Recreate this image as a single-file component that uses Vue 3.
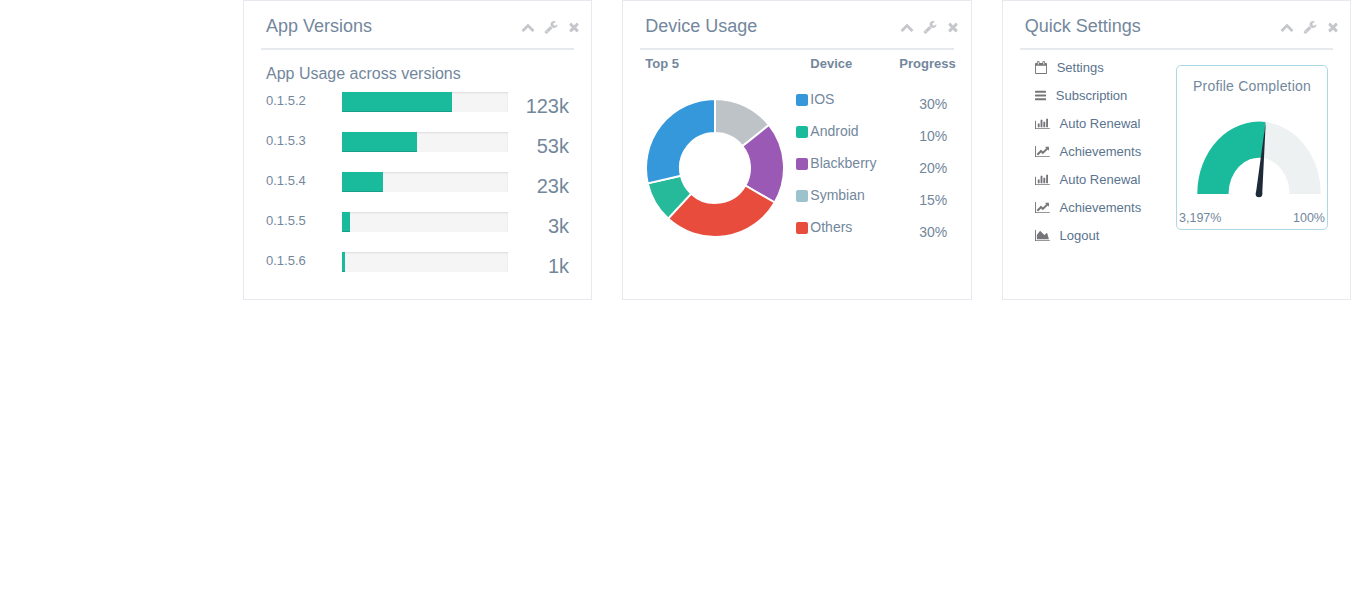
<script setup>
const icons = {
  up: 'M1683 1331l-166 165q-19 19-45 19t-45-19l-531-531-531 531q-19 19-45 19t-45-19l-166-165q-19-19-19-45.5t19-45.5l742-741q19-19 45-19t45 19l742 741q19 19 19 45.5t-19 45.5z',
  wrench: 'M448 1472q0-26-19-45t-45-19-45 19-19 45 19 45 45 19 45-19 19-45zm644-420l-682 682q-37 37-90 37-52 0-91-37l-106-108q-38-36-38-90 0-53 38-91l681-681q39 98 114.5 173.5t173.5 114.5zm634-435q0 39-23 106-47 134-164.5 217.5t-258.5 83.5q-185 0-316.5-131.5t-131.5-316.5 131.5-316.5 316.5-131.5q58 0 121.5 16.5t107.5 46.5q16 11 16 28t-16 28l-293 169v224l193 107q5-3 79-48.5t135.5-81 70.5-35.5q15 0 23.5 10t8.5 25z',
  close: 'M1490 1322q0 40-28 68l-136 136q-28 28-68 28t-68-28l-294-294-294 294q-28 28-68 28t-68-28l-136-136q-28-28-28-68t28-68l294-294-294-294q-28-28-28-68t28-68l136-136q28-28 68-28t68 28l294 294 294-294q28-28 68-28t68 28l136 136q28 28 28 68t-28 68l-294 294 294 294q28 28 28 68z'
}
const glyphs = {
  calendar: { vb: '64 0 1664 1792', w: 12, d: 'M192 1664h1408v-1024h-1408v1024zm384-1216v-288q0-14-9-23t-23-9h-64q-14 0-23 9t-9 23v288q0 14 9 23t23 9h64q14 0 23-9t9-23zm768 0v-288q0-14-9-23t-23-9h-64q-14 0-23 9t-9 23v288q0 14 9 23t23 9h64q14 0 23-9t9-23zm384-64v1280q0 52-38 90t-90 38h-1408q-52 0-90-38t-38-90v-1280q0-52 38-90t90-38h128v-96q0-66 47-113t113-47h64q66 0 113 47t47 113v96h384v-96q0-66 47-113t113-47h64q66 0 113 47t47 113v96h128q52 0 90 38t38 90z' },
  bars: { vb: '128 0 1536 1792', w: 11.14, d: 'M1664 1344v128q0 26-19 45t-45 19h-1408q-26 0-45-19t-19-45v-128q0-26 19-45t45-19h1408q26 0 45 19t19 45zm0-512v128q0 26-19 45t-45 19h-1408q-26 0-45-19t-19-45v-128q0-26 19-45t45-19h1408q26 0 45 19t19 45zm0-512v128q0 26-19 45t-45 19h-1408q-26 0-45-19t-19-45v-128q0-26 19-45t45-19h1408q26 0 45 19t19 45z' },
  bar: { vb: '0 0 2048 1792', w: 14.86, d: 'M640 896v512h-256v-512h256zm384-512v1024h-256v-1024h256zm1024 1152v128h-2048v-1152h128v1024h1920zm-640-896v768h-256v-768h256zm384-384v1152h-256v-1152h256z' },
  line: { vb: '0 0 2048 1792', w: 14.86, d: 'M2048 1536v128h-2048v-1536h128v1408h1920zm-128-1248v435q0 21-19.5 29.5t-35.5-7.5l-121-121-633 633q-10 10-23 10t-23-10l-233-233-416 416-192-192 585-585q10-10 23-10t23 10l233 233 464-464-121-121q-16-16-7.5-35.5t29.5-19.5h435q14 0 23 9t9 23z' },
  area: { vb: '0 0 2048 1792', w: 14.86, d: 'M2048 1536v128h-2048v-1536h128v1408h1920zm-384-1024l256 896h-1664v-576l448-576 576 576z' }
}
const versions = [
  { name: '0.1.5.2', pct: 66.3, val: '123k' },
  { name: '0.1.5.3', pct: 45, val: '53k' },
  { name: '0.1.5.4', pct: 24.7, val: '23k' },
  { name: '0.1.5.5', pct: 5, val: '3k' },
  { name: '0.1.5.6', pct: 2, val: '1k' }
]
const devices = [
  { name: 'IOS', color: '#3498DB', pct: '30%' },
  { name: 'Android', color: '#1ABB9C', pct: '10%' },
  { name: 'Blackberry', color: '#9B59B6', pct: '20%' },
  { name: 'Symbian', color: '#9CC2CB', pct: '15%' },
  { name: 'Others', color: '#E74C3C', pct: '30%' }
]
const cx = 70, cy = 70, R = 69, r = 35
const slices = [
  { v: 15, c: '#BDC3C7' },
  { v: 20, c: '#9B59B6' },
  { v: 30, c: '#E74C3C' },
  { v: 10, c: '#26B99A' },
  { v: 30, c: '#3498DB' }
]
const total = slices.reduce((s, x) => s + x.v, 0)
let acc = 0
const pt = (rad, a) => `${(cx + rad * Math.sin(a)).toFixed(2)} ${(cy - rad * Math.cos(a)).toFixed(2)}`
const donut = slices.map((s) => {
  const a0 = (acc / total) * Math.PI * 2
  acc += s.v
  const a1 = (acc / total) * Math.PI * 2
  const large = a1 - a0 > Math.PI ? 1 : 0
  return {
    c: s.c,
    d: `M${pt(R, a0)}A${R} ${R} 0 ${large} 1 ${pt(R, a1)}L${pt(r, a1)}A${r} ${r} 0 ${large} 0 ${pt(r, a0)}Z`
  }
})
const quick = [
  { icon: 'calendar', label: 'Settings' },
  { icon: 'bars', label: 'Subscription' },
  { icon: 'bar', label: 'Auto Renewal' },
  { icon: 'line', label: 'Achievements' },
  { icon: 'bar', label: 'Auto Renewal' },
  { icon: 'line', label: 'Achievements' },
  { icon: 'area', label: 'Logout' }
]
const titles = ['up', 'wrench', 'close']
</script>

<template>
  <div class="page">
    <section class="panel">
      <header class="title">
        <h2>App Versions</h2>
        <div class="toolbox">
          <svg v-for="t in titles" :key="t" class="tool" viewBox="0 0 1792 1792"><path :d="icons[t]" /></svg>
        </div>
      </header>
      <h4 class="sub">App Usage across versions</h4>
      <div class="versions">
        <div v-for="v in versions" :key="v.name" class="vrow">
          <span class="vname">{{ v.name }}</span>
          <div class="track"><div class="fill" :style="{ width: v.pct + '%' }"></div></div>
          <span class="vval">{{ v.val }}</span>
        </div>
      </div>
    </section>

    <section class="panel">
      <header class="title">
        <h2>Device Usage</h2>
        <div class="toolbox">
          <svg v-for="t in titles" :key="t" class="tool" viewBox="0 0 1792 1792"><path :d="icons[t]" /></svg>
        </div>
      </header>
      <div class="thead">
        <span>Top 5</span>
        <span>Device</span>
        <span>Progress</span>
      </div>
      <div class="dbody">
        <svg class="donut" width="140" height="140" viewBox="0 0 140 140">
          <path v-for="s in donut" :key="s.c" :d="s.d" :fill="s.c" stroke="#fff" stroke-width="2" />
        </svg>
        <ul class="legend">
          <li v-for="d in devices" :key="d.name">
            <i class="sq" :style="{ background: d.color }"></i>
            <span class="dname">{{ d.name }}</span>
            <span class="dpct">{{ d.pct }}</span>
          </li>
        </ul>
      </div>
    </section>

    <section class="panel">
      <header class="title">
        <h2>Quick Settings</h2>
        <div class="toolbox">
          <svg v-for="t in titles" :key="t" class="tool" viewBox="0 0 1792 1792"><path :d="icons[t]" /></svg>
        </div>
      </header>
      <div class="qbody">
        <ul class="quick">
          <li v-for="(q, i) in quick" :key="i">
            <svg class="qicon" :viewBox="glyphs[q.icon].vb" :width="glyphs[q.icon].w" height="13"><path :d="glyphs[q.icon].d" /></svg>
            <span>{{ q.label }}</span>
          </li>
        </ul>
        <div class="card">
          <h4>Profile Completion</h4>
          <svg class="gauge" width="150" height="82" viewBox="0 0 150 82">
            <path d="M20.3 76A61.7 72 0 0 1 88.5 4L85.7 39.9A30.5 36.3 0 0 0 51.5 76Z" fill="#1ABB9C" />
            <path d="M88.5 4A61.7 72 0 0 1 143.7 76H112.5A30.5 36.3 0 0 0 85.7 39.9Z" fill="#EEF1F2" />
            <path d="M88.8 3L85.2 76.3A3.3 3.3 0 0 1 78.8 76Z" fill="#1F2A38" />
            <circle cx="82" cy="76" r="3.3" fill="#1F2A38" />
          </svg>
          <div class="gl"><span>3,197%</span><span>100%</span></div>
        </div>
      </div>
    </section>
  </div>
</template>

<style>
html, body { margin: 0; background: #fff; }
</style>

<style scoped>
.page {
  display: grid;
  grid-template-columns: repeat(3, 1fr);
  gap: 30px;
  padding: 0 15px 0 243px;
  min-height: 613px;
  align-content: start;
  box-sizing: border-box;
  font-family: "Liberation Sans", Arial, sans-serif;
  color: #73879C;
}
.panel {
  box-sizing: border-box;
  height: 300px;
  border: 1px solid #E6E9ED;
  padding: 10px 17px;
  background: #fff;
  min-width: 0;
}
.title {
  box-sizing: border-box;
  height: 39px;
  border-bottom: 2px solid #E6E9ED;
  padding: 0 0 7px 5px;
  display: flex;
  align-items: center;
}
.title h2 {
  margin: 0;
  font-size: 18px;
  font-weight: 400;
  line-height: 20px;
}
.toolbox {
  margin-left: auto;
  margin-right: -6.5px;
  margin-top: 2px;
  display: flex;
  gap: 9px;
}
.tool {
  width: 14px;
  height: 14px;
  fill: #C5C7CB;
  display: block;
}
.sub {
  margin: 15px 0 9px 5px;
  font-size: 16px;
  font-weight: 400;
  line-height: 18px;
}
.versions {
  display: grid;
  gap: 20px;
  padding-left: 5px;
}
.vrow {
  display: grid;
  grid-template-columns: 76px 166px 61px;
  height: 20px;
}
.vname {
  font-size: 13px;
  line-height: 18px;
}
.track {
  height: 20px;
  background: #F5F5F5;
  box-shadow: inset 0 1px 2px rgba(0, 0, 0, 0.1);
}
.fill {
  height: 100%;
  background: #1ABB9C;
  box-shadow: inset 0 -1px 0 rgba(0, 0, 0, 0.15);
}
.vval {
  font-size: 20px;
  line-height: 28px;
  text-align: right;
}
.thead {
  display: grid;
  grid-template-columns: 165px 89px auto;
  margin: 6px 0 0;
  padding-left: 5px;
  font-size: 13px;
  font-weight: 700;
  line-height: 16px;
  white-space: nowrap;
}
.dbody {
  display: flex;
  padding-left: 5px;
}
.donut {
  display: block;
  margin-top: 26px;
  flex: none;
}
.legend {
  list-style: none;
  margin: 11px 0 0 11px;
  padding: 0;
  width: 151px;
  font-size: 14px;
}
.legend li {
  display: flex;
  height: 32px;
  line-height: 32px;
}
.sq {
  width: 12px;
  height: 12px;
  border-radius: 2px;
  margin: 11px 2px 0 0;
  flex: none;
}
.dpct {
  margin-left: auto;
  margin-top: 5px;
}
.qbody {
  display: flex;
}
.quick {
  list-style: none;
  margin: 3px 0 0 15px;
  padding: 0;
  font-size: 13px;
  color: #5A738E;
}
.quick li {
  display: flex;
  align-items: center;
  gap: 10px;
  height: 28px;
}
.qicon {
  fill: #757679;
  display: block;
  flex: none;
}
.card {
  box-sizing: border-box;
  width: 152px;
  height: 165px;
  margin: 15px 5px 0 auto;
  border: 1px solid #ADD8E6;
  border-radius: 5px;
  padding-top: 12px;
  text-align: center;
}
.card h4 {
  margin: 0;
  font-size: 14px;
  font-weight: 400;
  line-height: 16px;
  letter-spacing: 0.2px;
}
.gauge {
  display: block;
  margin-top: 24px;
}
.gl {
  display: flex;
  justify-content: space-between;
  margin-top: 10px;
  padding: 0 2px;
  font-size: 12.5px;
  line-height: 16px;
}
</style>
